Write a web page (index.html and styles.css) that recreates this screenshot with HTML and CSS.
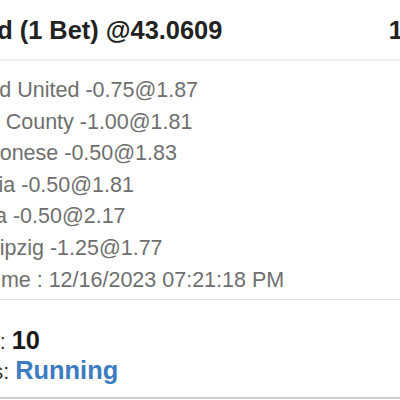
FILE: index.html
```html
<!DOCTYPE html>
<html lang="en">
<head>
<meta charset="utf-8">
<title>Bet slip</title>
<link rel="stylesheet" href="styles.css">
</head>
<body>
<div class="slip">
  <div class="slip-head">
    <span class="title">Sixfold (1 Bet) @43.0609</span>
    <span class="amount">10</span>
  </div>
  <div class="legs">
    <div class="leg">Sheffield United -0.75@1.87</div>
    <div class="leg">Orange County -1.00@1.81</div>
    <div class="leg">CD Japonese -0.50@1.83</div>
    <div class="leg">Mongolia -0.50@1.81</div>
    <div class="leg">Bologna -0.50@2.17</div>
    <div class="leg">FSV Leipzig -1.25@1.77</div>
    <div class="leg">Entry Time : 12/16/2023 07:21:18 PM</div>
  </div>
  <div class="summary">
    <div class="row"><span class="label">Staking:&nbsp;</span><span class="value">10</span></div>
    <div class="row"><span class="label">Returns:&nbsp;</span><span class="value running">Running</span></div>
  </div>
</div>
</body>
</html>
```
FILE: styles.css
```css
html, body {
  margin: 0;
  padding: 0;
  background: #fff;
}
body {
  width: 400px;
  height: 400px;
  overflow: hidden;
  font-family: "Liberation Sans", Arial, sans-serif;
}
.slip {
  margin-left: -72px;
  width: 489px;
}
.slip-head {
  display: flex;
  justify-content: space-between;
  padding: 14.5px 0 14.5px;
  border-bottom: 2px solid #eeeeee;
  font-size: 25.4px;
  line-height: 30px;
  font-weight: bold;
  color: #222;
  white-space: nowrap;
}
.legs {
  padding: 14px 0 2.8px;
  border-bottom: 1px solid #e4e4e4;
  font-size: 21.5px;
  line-height: 31.6px;
  color: #6f6f6f;
  white-space: nowrap;
}
.summary {
  padding: 25.5px 0 11.5px;
  border-bottom: 2px solid #cfcfcf;
  white-space: nowrap;
}
.row {
  display: flex;
  align-items: baseline;
  height: 30px;
  line-height: 30px;
}
.label {
  font-size: 21.5px;
  color: #333;
}
.value {
  font-size: 25.4px;
  font-weight: bold;
  color: #1a1a1a;
}
.value.running {
  color: #3d7cc0;
}
```
